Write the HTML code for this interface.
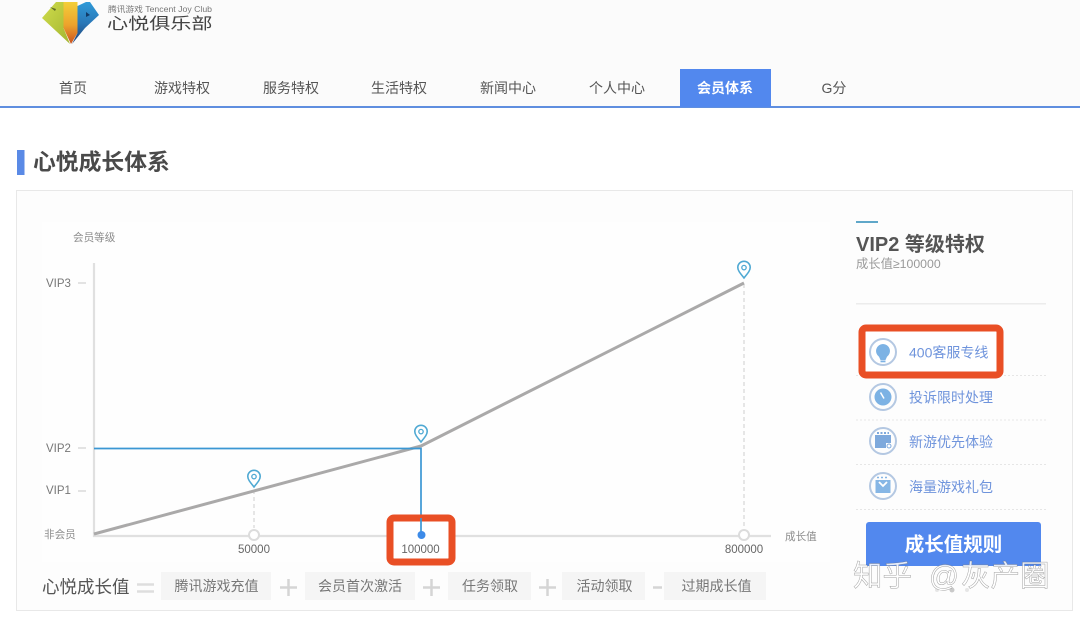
<!DOCTYPE html>
<html><head><meta charset="utf-8">
<style>
html,body{margin:0;padding:0;background:#fff;width:1080px;height:617px;overflow:hidden}
svg{display:block}
text{font-family:"Liberation Sans","Noto Sans CJK SC",sans-serif}
.nav{font-size:14px;fill:#555;text-anchor:middle}
.ax{font-size:11.5px;fill:#777}
.sm{font-size:10.6px;fill:#8c8c8c}
.num{font-size:11.5px;fill:#666;text-anchor:middle}
.li{font-size:14px;fill:#6f94dc}
.chip{font-size:14px;fill:#777;text-anchor:middle}
.wm{font-size:29.5px;fill:#fff;fill-opacity:.85;stroke:#666;stroke-opacity:.6;stroke-width:.5px}
</style></head><body>
<svg width="1080" height="617" viewBox="0 0 1080 617" xmlns="http://www.w3.org/2000/svg">
<defs>
<linearGradient id="mid" x1="0" y1="0" x2="0" y2="1"><stop offset="0" stop-color="#f3cf3a"/><stop offset=".55" stop-color="#eda22c"/><stop offset="1" stop-color="#c9511f"/></linearGradient>
<linearGradient id="lft" x1="0" y1="0" x2="1" y2="1"><stop offset="0" stop-color="#cfdc4c"/><stop offset="1" stop-color="#a3b52f"/></linearGradient>
<linearGradient id="rgt" x1="0" y1="0" x2="0" y2="1"><stop offset="0" stop-color="#2f9ad8"/><stop offset=".5" stop-color="#2a78b8"/><stop offset="1" stop-color="#1f3f70"/></linearGradient>
<g id="pin"><path d="M0 8 C-4 3 -6.2 .5 -6.2 -2.5 A6.2 6.2 0 0 1 6.2 -2.5 C6.2 .5 4 3 0 8Z" fill="#fff" stroke="#4fa9d3" stroke-width="1.6"/><circle cx="0" cy="-2.4" r="2.2" fill="none" stroke="#4fa9d3" stroke-width="1.3"/></g>
</defs>

<!-- header -->
<rect width="1080" height="106" fill="#fbfbfb"/>
<rect y="106" width="1080" height="2" fill="#5f8edf"/>
<!-- logo -->
<path d="M42 18 L56 2 L63.500 2 L63.500 28 L70 44Z" fill="url(#lft)"/>
<path d="M50 7 L56 9 L55 11Z" fill="#5d6a25"/>
<path d="M63.500 2 H77.500 V33 L71 44 L63.500 28Z" fill="url(#mid)"/>
<path d="M77.500 33 V6 L86 2 L90 2 L99 15 L85 28 L72 44Z" fill="url(#rgt)"/>
<path d="M86 12 L90 15 L86 17Z" fill="#123a66"/>
<text x="108" y="12" font-size="8" fill="#777" textLength="104" lengthAdjust="spacingAndGlyphs">腾讯游戏 Tencent Joy Club</text>
<text transform="translate(107,29) scale(1.32,1)" font-size="16" fill="#444">心悦俱乐部</text>

<!-- nav -->
<rect x="680" y="69" width="91" height="38" fill="#5288ee"/>
<text class="nav" x="73" y="93">首页</text>
<text class="nav" x="182" y="93">游戏特权</text>
<text class="nav" x="291" y="93">服务特权</text>
<text class="nav" x="399" y="93">生活特权</text>
<text class="nav" x="508" y="93">新闻中心</text>
<text class="nav" x="617" y="93">个人中心</text>
<text class="nav" x="725" y="93" style="fill:#fff;font-weight:700">会员体系</text>
<text class="nav" x="834" y="93">G分</text>

<!-- title -->
<rect x="17" y="150" width="7.5" height="25" fill="#5a8ae6"/>
<text x="33" y="170" font-size="22.8" font-weight="700" fill="#4a4a4a">心悦成长体系</text>

<!-- panel -->
<rect x="16.5" y="190.5" width="1056" height="420" fill="#fdfdfd" stroke="#e8e8e8"/>
<rect x="42" y="222" width="788" height="340" fill="#fefefe"/>

<!-- chart -->
<text class="sm" x="73" y="241">会员等级</text>
<text class="ax" x="46" y="287">VIP3</text>
<text class="ax" x="46" y="452">VIP2</text>
<text class="ax" x="46" y="494">VIP1</text>
<text class="sm" x="44" y="538">非会员</text>
<path d="M78 283H86M78 448H86M78 491H86" stroke="#c8c8c8" stroke-width="1"/>
<path d="M94 263V536H771" fill="none" stroke="#e0e0e0" stroke-width="2.2"/>
<path d="M254 490V528M744 284V528" stroke="#cfcfcf" stroke-width="1" stroke-dasharray="4 3" fill="none"/>
<path d="M94 534 L421 446 L744 283" fill="none" stroke="#aaa9a9" stroke-width="3" stroke-linejoin="round"/>
<path d="M94 448.500H421V534" fill="none" stroke="#3b97d3" stroke-width="1.7"/>
<circle cx="254" cy="535" r="5" fill="#fff" stroke="#dcdcdc" stroke-width="2"/>
<circle cx="744" cy="535" r="5" fill="#fff" stroke="#dcdcdc" stroke-width="2"/>
<use href="#pin" x="254" y="479"/>
<use href="#pin" x="421" y="434"/>
<use href="#pin" x="744" y="270"/>
<text class="num" x="254" y="553">50000</text>
<text class="num" x="744" y="553">800000</text>
<text class="sm" x="785" y="540">成长值</text>

<!-- red box 100000 -->
<rect x="390" y="518" width="62" height="44" rx="4" fill="#fff" stroke="#e94f25" stroke-width="7"/>
<path d="M421 518V534" stroke="#3b97d3" stroke-width="1.7"/>
<circle cx="421.500" cy="535" r="4" fill="#3d8be8"/>
<text class="num" x="420.500" y="553">100000</text>

<!-- formula -->
<text x="42" y="593" font-size="17.500" fill="#555">心悦成长值</text>
<path d="M137 584.500H154M137 591.500H154" stroke="#dedede" stroke-width="2.500"/>
<rect x="161" y="572" width="110" height="28" fill="#f5f5f5"/>
<text class="chip" x="216.500" y="591">腾讯游戏充值</text>
<path d="M280 587.500H297M288.500 579V596" stroke="#d5d5d5" stroke-width="2.500"/>
<rect x="305" y="572" width="110" height="28" fill="#f5f5f5"/>
<text class="chip" x="360" y="591">会员首次激活</text>
<path d="M423 587.500H440M431.500 579V596" stroke="#d5d5d5" stroke-width="2.500"/>
<rect x="448" y="572" width="83" height="28" fill="#f5f5f5"/>
<text class="chip" x="490" y="591">任务领取</text>
<path d="M539 587.500H556M547.500 579V596" stroke="#d5d5d5" stroke-width="2.500"/>
<rect x="562" y="572" width="83" height="28" fill="#f5f5f5"/>
<text class="chip" x="604.500" y="591">活动领取</text>
<path d="M653 587.500H662" stroke="#d5d5d5" stroke-width="2.500"/>
<rect x="664" y="572" width="102" height="28" fill="#f5f5f5"/>
<text class="chip" x="716.500" y="591">过期成长值</text>

<!-- right column -->
<rect x="856" y="221" width="22" height="2" fill="#5fa7c9"/>
<text x="856" y="251" font-size="20" font-weight="700" fill="#555">VIP2 等级特权</text>
<text x="856" y="268" font-size="12.300" fill="#999">成长值≥100000</text>
<rect x="856" y="303" width="190" height="1.500" fill="#ececec"/>
<path d="M856 375.500H1046M856 420H1046M856 464.500H1046M856 509.500H1046" stroke="#e6e6e6" stroke-width="1" stroke-dasharray="2 2"/>

<!-- red box 400 -->
<rect x="862" y="328" width="138" height="47" rx="4" fill="#fff" stroke="#e94f25" stroke-width="7"/>

<!-- list icons -->
<g fill="none" stroke="#b4c8e2" stroke-width="2">
<circle cx="883" cy="352" r="13"/><circle cx="883" cy="397" r="13"/><circle cx="883" cy="441" r="13"/><circle cx="883" cy="486" r="13"/>
</g>
<!-- bulb -->
<path d="M883 344a7 7 0 0 1 4 12.700L885.500 360h-5L879 356.700A7 7 0 0 1 883 344Z" fill="#7cb2e4"/>
<rect x="880.500" y="360.500" width="5" height="1.800" fill="#7cb2e4"/>
<!-- clock -->
<circle cx="883" cy="397" r="8.500" fill="#7cb2e4"/>
<path d="M880.500 392.500L884 398.500" stroke="#fff" stroke-width="1.500"/>
<!-- calendar -->
<rect x="875" y="435" width="16" height="13" fill="#7ea9dc"/>
<path d="M877 433h12" stroke="#7ea9dc" stroke-width="2" stroke-dasharray="2 1.500"/>
<rect x="886" y="443" width="6" height="6" fill="#fff"/>
<circle cx="889" cy="446" r="2" fill="none" stroke="#7ea9dc"/>
<!-- gift -->
<rect x="875.500" y="480" width="15" height="13" fill="#86b6e5"/>
<path d="M879 482l4 4 4-4" stroke="#fff" stroke-width="1.800" fill="none"/>
<path d="M877 477.500h12" stroke="#86b6e5" stroke-width="1.500" stroke-dasharray="2 2"/>

<text class="li" x="909" y="357.500">400客服专线</text>
<text class="li" x="909" y="402.500">投诉限时处理</text>
<text class="li" x="909" y="447">新游优先体验</text>
<text class="li" x="909" y="492">海量游戏礼包</text>

<!-- button -->
<path d="M866 525a3 3 0 0 1 3-3h169a3 3 0 0 1 3 3v41H866Z" fill="#5288ee"/>
<text x="953.500" y="551" font-size="19.500" font-weight="700" fill="#fff" text-anchor="middle">成长值规则</text>
<circle cx="937" cy="590" r="2" fill="#e6e6e6"/><circle cx="952" cy="590" r="2.500" fill="#c9c9c9"/><circle cx="967" cy="590" r="2" fill="#e6e6e6"/>

<!-- watermark -->
<text class="wm" x="853" y="586">知乎</text>
<text class="wm" x="929" y="586">@</text>
<text class="wm" x="961" y="586">灰产圈</text>
</svg>
</body></html>
